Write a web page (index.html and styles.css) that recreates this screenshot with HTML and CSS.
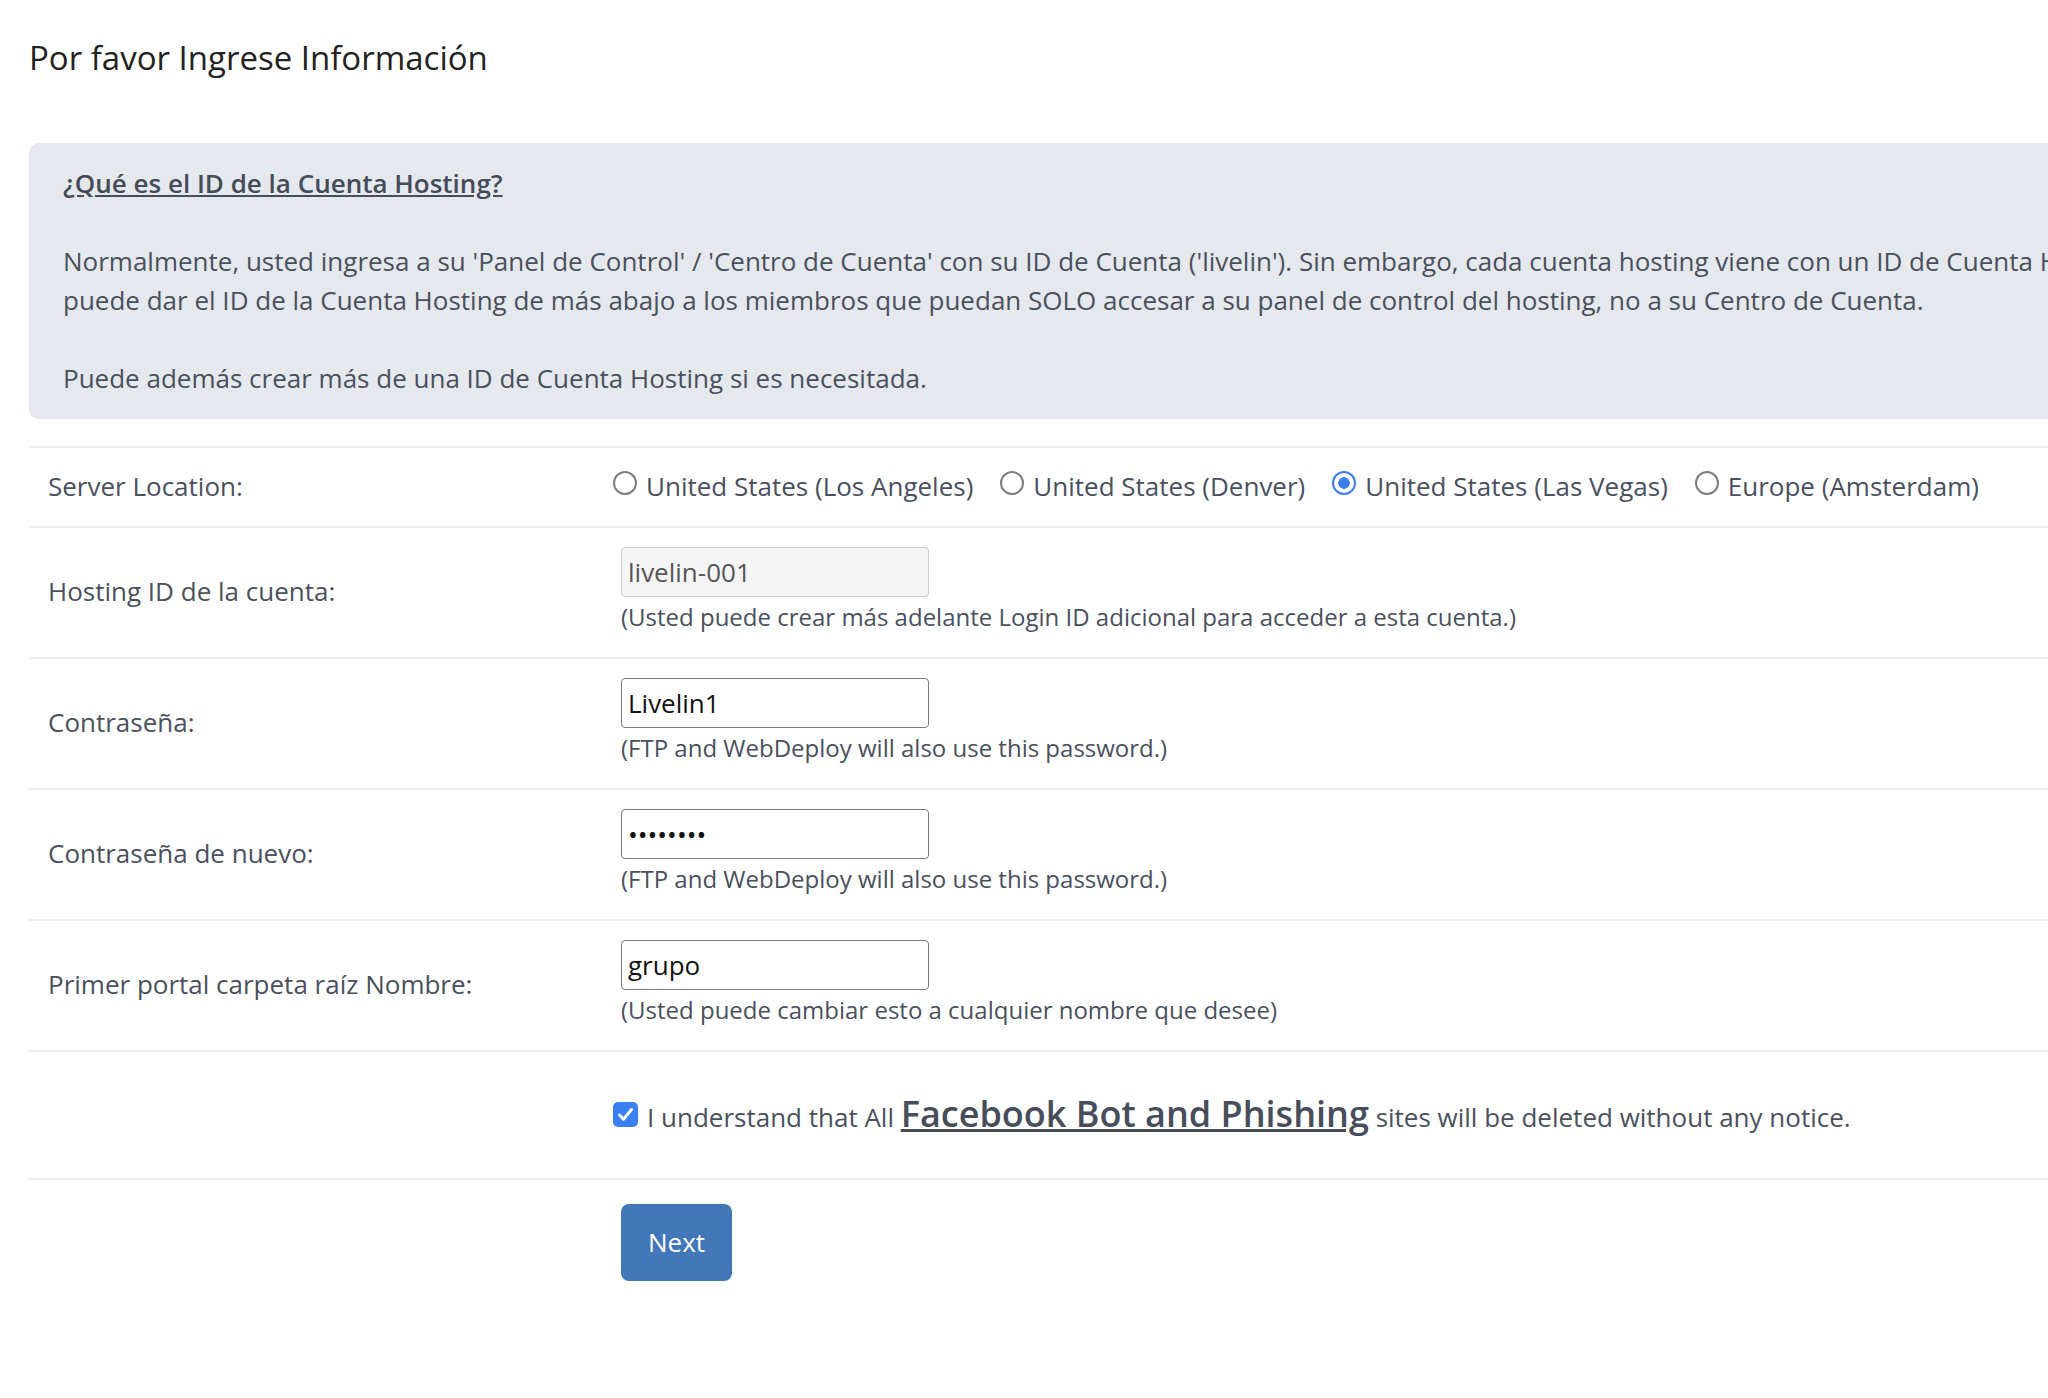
FILE: index.html
```html
<!DOCTYPE html>
<html lang="es">
<head>
<meta charset="utf-8">
<title>Por favor Ingrese Información</title>
<link rel="stylesheet" href="styles.css">
</head>
<body>
<div class="page">
  <h1 class="title">Por favor Ingrese Información</h1>

  <div class="info">
    <p><a class="info-link" href="#">¿Qué es el ID de la Cuenta Hosting?</a></p>
    <p>Normalmente, usted ingresa a su 'Panel de Control' / 'Centro de Cuenta' con su ID de Cuenta ('livelin'). Sin embargo, cada cuenta hosting viene con un ID de Cuenta Hosting separado. Usted<br>puede dar el ID de la Cuenta Hosting de más abajo a los miembros que puedan SOLO accesar a su panel de control del hosting, no a su Centro de Cuenta.</p>
    <p>Puede además crear más de una ID de Cuenta Hosting si es necesitada.</p>
  </div>

  <form class="form" onsubmit="return false">
    <div class="row">
      <div class="cell-label">Server Location:</div>
      <div class="cell-field">
        <div class="radio-group">
          <label class="radio-option"><input class="radio" type="radio" name="loc"><span>United States (Los Angeles)</span></label>
          <label class="radio-option"><input class="radio" type="radio" name="loc"><span>United States (Denver)</span></label>
          <label class="radio-option"><input class="radio" type="radio" name="loc" checked><span>United States (Las Vegas)</span></label>
          <label class="radio-option"><input class="radio" type="radio" name="loc"><span>Europe (Amsterdam)</span></label>
        </div>
      </div>
    </div>

    <div class="row">
      <div class="cell-label">Hosting ID de la cuenta:</div>
      <div class="cell-field">
        <input class="text-input readonly" type="text" value="livelin-001" readonly>
        <p class="hint">(Usted puede crear más adelante Login ID adicional para acceder a esta cuenta.)</p>
      </div>
    </div>

    <div class="row">
      <div class="cell-label">Contraseña:</div>
      <div class="cell-field">
        <input class="text-input" type="text" value="Livelin1">
        <p class="hint">(FTP and WebDeploy will also use this password.)</p>
      </div>
    </div>

    <div class="row">
      <div class="cell-label">Contraseña de nuevo:</div>
      <div class="cell-field">
        <input class="text-input" type="password" value="Livelin1">
        <p class="hint">(FTP and WebDeploy will also use this password.)</p>
      </div>
    </div>

    <div class="row">
      <div class="cell-label">Primer portal carpeta raíz Nombre:</div>
      <div class="cell-field">
        <input class="text-input" type="text" value="grupo">
        <p class="hint">(Usted puede cambiar esto a cualquier nombre que desee)</p>
      </div>
    </div>

    <div class="row">
      <div class="cell-label"></div>
      <div class="cell-field">
        <label class="agree">
          <span class="cb">
            <input class="cb-input" type="checkbox" checked>
            <svg class="cb-tick" viewBox="0 0 25 25" width="25" height="25" aria-hidden="true"><path d="M6.5 13l4 4.2L18.5 7.5" fill="none" stroke="#fff" stroke-width="3" stroke-linecap="round" stroke-linejoin="round"/></svg>
          </span>
          <span class="agree-text">I understand that All <a class="big-link" href="#">Facebook Bot and Phishing</a> sites will be deleted without any notice.</span>
        </label>
      </div>
    </div>

    <div class="row row-last">
      <div class="cell-label"></div>
      <div class="cell-field">
        <button class="btn-next" type="submit">Next</button>
      </div>
    </div>
  </form>
</div>
</body>
</html>
```

FILE: styles.css
```css
html, body {
  margin: 0;
  padding: 0;
  overflow: hidden;
  background: #fff;
}

body {
  font-family: "Open Sans", "Noto Sans", sans-serif;
  font-size: 26px;
  line-height: 1.5;
  color: #4a505e;
}

.page {
  width: 2700px;
  padding: 0 29px;
}

.title {
  font-size: 33px;
  font-weight: 400;
  line-height: 1.2;
  color: #222;
  margin: 38px 0 65px;
}

.info {
  background: #e5e8ed;
  border-radius: 10px;
  padding: 21px 34px;
  white-space: nowrap;
}

.info p {
  margin: 0 0 39px;
}

.info p:last-child {
  margin-bottom: 0;
}

.info-link {
  color: #454b59;
  font-weight: 600;
  text-decoration: underline;
}

.form {
  margin: 27px 0 0;
}

.row {
  display: grid;
  grid-template-columns: 573px 1fr;
  border-top: 2px solid #edeff2;
}

.cell-label {
  padding: 19px 19px 20px;
  align-self: center;
}

.cell-field {
  padding: 19px 19px 20px;
}

.radio-group {
  display: flex;
  gap: 27px;
  margin-left: -8px;
}

.radio-option {
  display: flex;
  align-items: center;
  gap: 9px;
  white-space: nowrap;
}

.radio {
  appearance: none;
  -webkit-appearance: none;
  width: 24px;
  height: 24px;
  margin: 0 0 7px;
  box-sizing: border-box;
  border: 2px solid #7d7d7d;
  border-radius: 50%;
  background: #fff;
}

.radio:checked {
  border: 2px solid #3b7ff5;
  background: radial-gradient(circle, #3b7ff5 0 5.5px, #fff 6px);
}

.text-input {
  display: block;
  width: 308px;
  height: 50px;
  box-sizing: border-box;
  margin: 0;
  padding: 0 6px;
  font-family: inherit;
  font-size: 26px;
  color: #111;
  background: #fff;
  border: 1px solid #7a7a7a;
  border-radius: 4px;
  outline: none;
}

.text-input.readonly {
  background: #f5f5f5;
  border-color: #cdcdcd;
  color: #555;
}

.hint {
  margin: 0;
  font-size: 24px;
  line-height: 40px;
}

.agree {
  display: flex;
  align-items: center;
  gap: 9px;
  min-height: 87px;
  margin-left: -8px;
  white-space: nowrap;
}

.cb {
  position: relative;
  width: 25px;
  height: 25px;
  flex: none;
}

.cb-input {
  appearance: none;
  -webkit-appearance: none;
  display: block;
  width: 25px;
  height: 25px;
  margin: 0;
  border-radius: 5px;
  background: #3b7ff5;
}

.cb-tick {
  position: absolute;
  left: 0;
  top: 0;
  pointer-events: none;
}

.big-link {
  font-size: 36px;
  font-weight: 600;
  color: #474d5b;
  text-decoration: underline;
}

.row-last .cell-field {
  padding-top: 24px;
}

.btn-next {
  font-family: inherit;
  font-size: 26px;
  line-height: 39px;
  padding: 19px 27px;
  color: #fff;
  background: #4277ba;
  border: 0;
  border-radius: 8px;
}
```
